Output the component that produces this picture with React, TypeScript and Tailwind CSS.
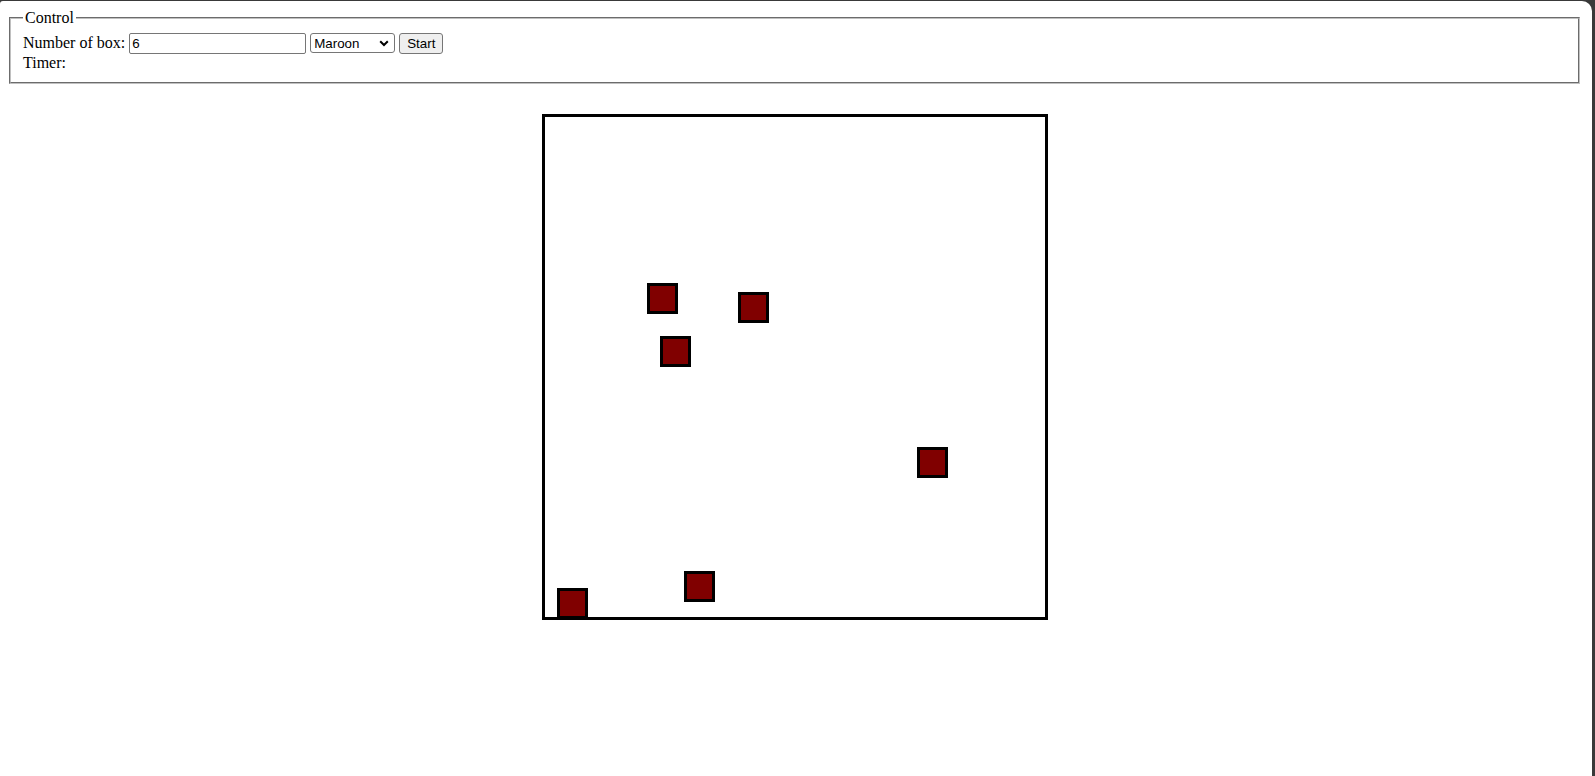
import React from "react";

const boxes = [
  { x: 102, y: 166 },
  { x: 193, y: 175 },
  { x: 115, y: 219 },
  { x: 372, y: 330 },
  { x: 139, y: 454 },
  { x: 12, y: 471 },
];

export default function App() {
  return (
    <div className="min-h-screen bg-[#393939] pt-[1px] pr-[3px]">
      <div className="min-h-[775px] bg-white rounded-tl-[3px] rounded-tr-[10px] pt-[8px] pl-[7px] pr-[10px] text-[16px] leading-[normal] text-black [font-family:'Liberation_Serif','Times_New_Roman',serif]">
        <fieldset className="mx-[2px] border-2 [border-style:groove] border-[#c0c0c0] px-[12px] pt-[5.6px] pb-[10px]">
          <legend className="px-[2px] leading-[normal]">Control</legend>
          <div className="leading-[normal]">
            Number of box:{" "}
            <input
              type="text"
              defaultValue="6"
              className="w-[177px] h-[21px] align-baseline border border-[#767676] rounded-[2px] px-[2px] py-[1px] text-[13.333px] leading-[normal] [font-family:'Liberation_Sans',Arial,sans-serif] outline-none"
            />{" "}
            <span className="relative inline-block align-baseline">
              <select
                defaultValue="Maroon"
                className="appearance-none w-[85px] h-[20px] border border-[#767676] rounded-[3px] pl-[3px] pr-[18px] text-[13.333px] leading-[normal] [font-family:'Liberation_Sans',Arial,sans-serif] bg-white outline-none"
              >
                <option>Maroon</option>
                <option>Red</option>
                <option>Blue</option>
                <option>Green</option>
              </select>
              <svg
                className="pointer-events-none absolute right-[6px] top-[7px]"
                width="10"
                height="7"
                viewBox="0 0 10 7"
              >
                <path d="M1.2 1.2 L5 5 L8.8 1.2" fill="none" stroke="#000" strokeWidth="2" />
              </svg>
            </span>{" "}
            <button
              type="button"
              className="h-[21px] align-baseline bg-[#efefef] border border-[#767676] rounded-[3px] px-[7px] text-[13.333px] leading-[normal] [font-family:'Liberation_Sans',Arial,sans-serif]"
            >
              Start
            </button>
          </div>
          <div className="leading-[normal]">Timer:</div>
        </fieldset>
        <div className="relative mx-auto mt-[30px] w-[506px] h-[506px] border-[3px] border-black">
          {boxes.map((b, i) => (
            <div
              key={i}
              className="absolute w-[31px] h-[31px] border-[3px] border-black bg-[#800000]"
              style={{ left: b.x, top: b.y }}
            />
          ))}
        </div>
      </div>
    </div>
  );
}
